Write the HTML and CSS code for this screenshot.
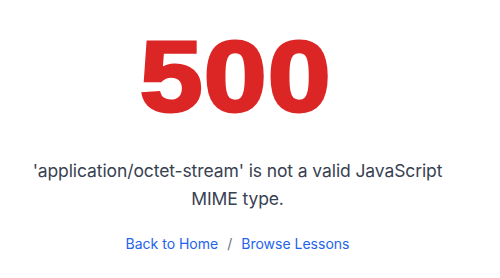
FILE: index.html
```html
<!DOCTYPE html>
<html lang="en">
<head>
    <meta charset="UTF-8">
    <meta name="viewport" content="width=device-width, initial-scale=1.0">
    <title>500 - Server Error</title>
    <link rel="stylesheet" href="styles.css">
</head>
<body>
    <div class="error-page">
        <h1 class="error-code">500</h1>
        <p class="error-message">'application/octet-stream' is not a valid JavaScript MIME type.</p>
        <div class="error-links">
            <a href="#">Back to Home</a>
            <span class="sep">/</span>
            <a href="#">Browse Lessons</a>
        </div>
    </div>
</body>
</html>
```

FILE: styles.css
```css
body {
    font-family: Inter, 'Liberation Sans', Arial, sans-serif;
    background-color: #ffffff;
    color: #374151;
    margin: 0;
    padding: 0;
}
.error-page {
    display: flex;
    flex-direction: column;
    align-items: center;
    text-align: center;
    padding: 26px 35px 0 10px;
}
.error-code {
    font-family: 'Liberation Sans', Arial, sans-serif;
    font-size: 101px;
    font-weight: 700;
    letter-spacing: 1px;
    -webkit-text-stroke: 3px #dc2626;
    color: #dc2626;
    line-height: 1;
    margin: 0 3px 0 0;
    transform: scaleX(1.12);
}
.error-message {
    font-size: 17.5px;
    letter-spacing: -0.1px;
    line-height: 28px;
    max-width: 430px;
    margin: 30px 0 0;
}
.error-links {
    margin-top: 22px;
    font-size: 14px;
    display: flex;
    gap: 9px;
}
.error-links a {
    color: #2563eb;
    text-decoration: none;
}
.sep {
    color: #6b7280;
}
```
